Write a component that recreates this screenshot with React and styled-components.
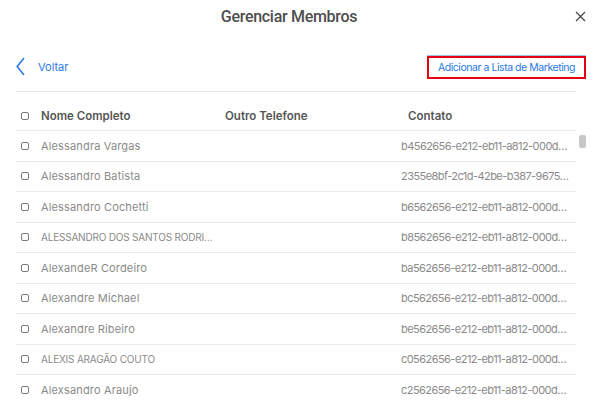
import React from 'react';
import styled, { createGlobalStyle } from 'styled-components';

const GlobalStyle = createGlobalStyle`
  html, body { margin: 0; padding: 0; background: #fff; }
  body { font-family: Inter, "Open Sans", sans-serif; }
`;

const Modal = styled.div`
  width: 601px;
  height: 404px;
  overflow: hidden;
  background: #fff;
  position: relative;
`;

const TitleBar = styled.div`
  height: 32px;
  display: grid;
  grid-template-columns: 1fr auto 1fr;
  align-items: center;
  padding: 0 15px 0 16px;
`;

const Title = styled.h1`
  grid-column: 2;
  margin: 0 0 0 -24px;
  font-family: Roboto, Inter, sans-serif;
  font-size: 16px;
  font-weight: 500;
  color: #4d4d4d;
  letter-spacing: -0.3px;
`;

const CloseButton = styled.button`
  justify-self: end;
  border: 0;
  background: none;
  padding: 0;
  width: 11px;
  height: 11px;
  display: flex;
  cursor: pointer;
`;

const Toolbar = styled.div`
  margin-top: 24px;
  height: 23px;
  padding: 0 15px 0 16px;
  display: flex;
  align-items: center;
  justify-content: space-between;
`;

const BackLink = styled.a`
  display: flex;
  align-items: center;
  gap: 13px;
  color: #2a7ae2;
  font-size: 11px;
  text-decoration: none;
  margin-top: -2px;
`;

const MarketingButton = styled.button`
  height: 23px;
  box-sizing: border-box;
  padding: 0 9px;
  border: 2px solid #e60012;
  box-shadow: 0 -1px 0 #9cc2f0;
  background: #fff;
  color: #2a7ae2;
  font-family: inherit;
  font-size: 10.5px;
  letter-spacing: -0.45px;
  cursor: pointer;
`;

const Divider = styled.div`
  margin: 12px 25px 0 16px;
  height: 1px;
  background: #e8e8e8;
`;

const Table = styled.div`
  margin: 0 25px 0 16px;
  padding-top: 9px;
`;

const Row = styled.div`
  display: grid;
  grid-template-columns: 25px 184px 176px 1fr;
  align-items: center;
  height: ${p => (p.$head ? '29px' : '29.5px')};
  border-bottom: 1px solid #ebebeb;
`;

const Cell = styled.div`
  white-space: nowrap;
  padding-left: ${p => p.$pl || 0}px;
  font-size: ${p => (p.$head ? '11.5px' : '11px')};
  font-weight: ${p => (p.$head ? 600 : 400)};
  letter-spacing: ${p => p.$ls || 0}px;
  color: ${p => (p.$head ? '#555' : '#8a8a8a')};
`;

const NameCell = styled(Cell)`
  font-size: ${p => (p.$caps ? '10px' : '11px')};
  letter-spacing: ${p => (p.$caps ? '-0.2px' : '0.15px')};
`;

const Check = styled.span`
  display: block;
  margin-left: 5px;
  width: 8px;
  height: 8px;
  border: 1px solid #7a7a7a;
  border-radius: 2px;
  box-sizing: border-box;
`;

const ScrollThumb = styled.div`
  position: absolute;
  left: 579px;
  top: 135px;
  width: 7px;
  height: 13px;
  border-radius: 2px;
  background: #c8c8c8;
`;

const members = [
  ['Alessandra Vargas', 'b4562656-e212-eb11-a812-000d…'],
  ['Alessandro Batista', '2355e8bf-2c1d-42be-b387-9675…'],
  ['Alessandro Cochetti', 'b6562656-e212-eb11-a812-000d…'],
  ['ALESSANDRO DOS SANTOS RODRI…', 'b8562656-e212-eb11-a812-000d…'],
  ['AlexandeR Cordeiro', 'ba562656-e212-eb11-a812-000d…'],
  ['Alexandre Michael', 'bc562656-e212-eb11-a812-000d…'],
  ['Alexandre Ribeiro', 'be562656-e212-eb11-a812-000d…'],
  ['ALEXIS ARAGÃO COUTO', 'c0562656-e212-eb11-a812-000d…'],
  ['Alexsandro Araujo', 'c2562656-e212-eb11-a812-000d…'],
];

export default function App() {
  return (
    <Modal>
      <GlobalStyle />
      <TitleBar>
        <Title>Gerenciar Membros</Title>
        <CloseButton aria-label="Fechar">
          <svg width="11" height="11" viewBox="0 0 11 11">
            <path d="M1 1L10 10M10 1L1 10" stroke="#444" strokeWidth="1.2" />
          </svg>
        </CloseButton>
      </TitleBar>
      <Toolbar>
        <BackLink href="#">
          <svg width="9" height="19" viewBox="0 0 9 19">
            <path d="M8 1L1.2 9.5L8 18" fill="none" stroke="#2a7ae2" strokeWidth="1.6" />
          </svg>
          Voltar
        </BackLink>
        <MarketingButton>Adicionar a Lista de Marketing</MarketingButton>
      </Toolbar>
      <Divider />
      <Table>
        <Row $head>
          <Check />
          <Cell $head>Nome Completo</Cell>
          <Cell $head>Outro Telefone</Cell>
          <Cell $head $pl={7}>Contato</Cell>
        </Row>
        {members.map(([name, id]) => (
          <Row key={id + name}>
            <Check />
            <NameCell $caps={name === name.toUpperCase()}>{name}</NameCell>
            <Cell />
            <Cell $ls={-0.55}>{id}</Cell>
          </Row>
        ))}
      </Table>
      <ScrollThumb />
    </Modal>
  );
}
